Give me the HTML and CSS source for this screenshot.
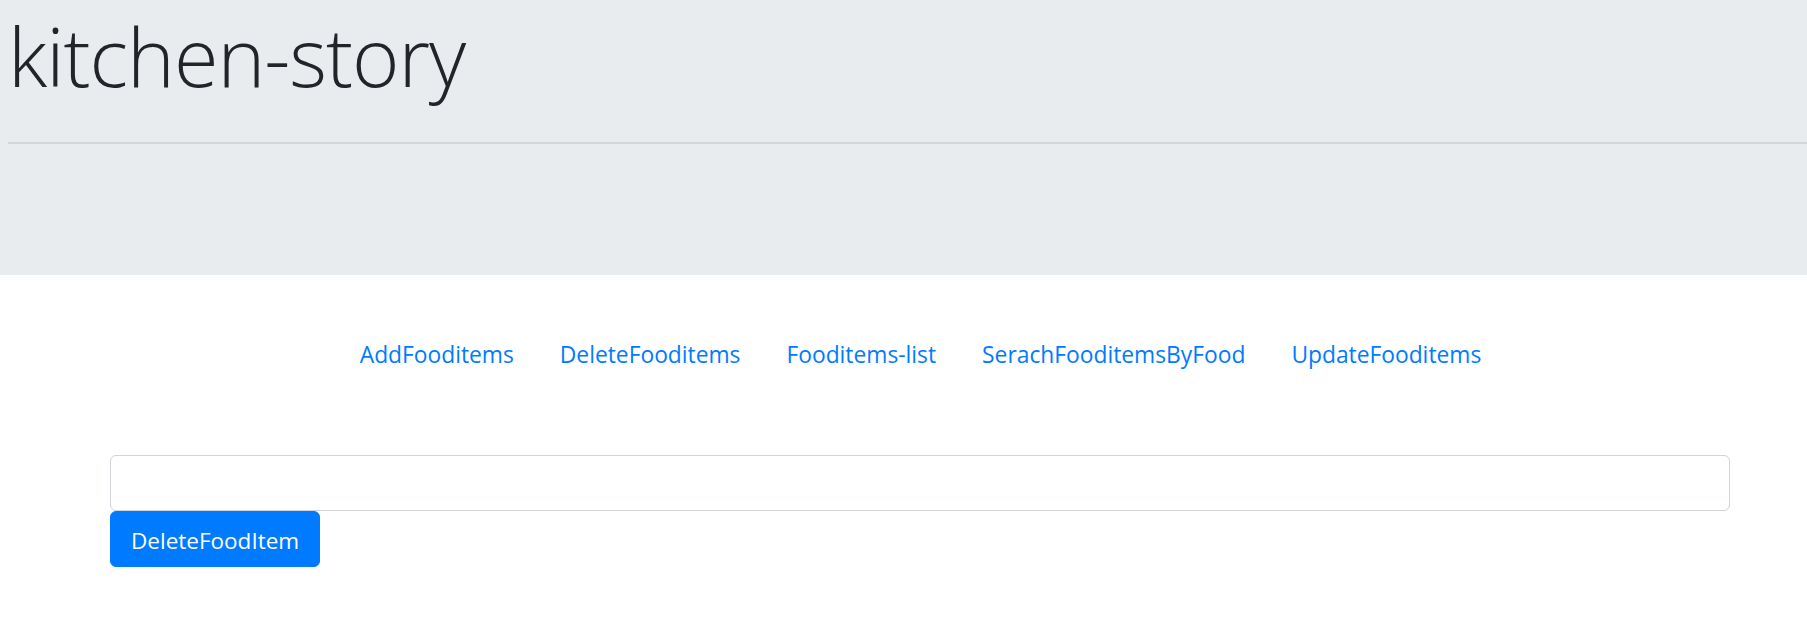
FILE: index.html
```html
<!DOCTYPE html>
<html lang="en">
<head>
<meta charset="utf-8">
<title>kitchen-story</title>
<link rel="stylesheet" href="styles.css">
</head>
<body>
<header class="jumbotron">
  <h1 class="title">kitchen-story</h1>
  <hr class="rule">
</header>
<nav class="nav">
  <a class="nav-link" href="#">AddFooditems</a>
  <a class="nav-link" href="#">DeleteFooditems</a>
  <a class="nav-link" href="#">Fooditems-list</a>
  <a class="nav-link" href="#">SerachFooditemsByFood</a>
  <a class="nav-link" href="#">UpdateFooditems</a>
</nav>
<main class="content">
  <input class="field" type="text">
  <button class="btn" type="button">DeleteFoodItem</button>
</main>
</body>
</html>
```
FILE: styles.css
```css
html, body {
  margin: 0;
  padding: 0;
  background: #fff;
}
body {
  font-family: "Open Sans", "Noto Sans", sans-serif;
  color: #212529;
}
.jumbotron {
  background: #e9ecef;
  height: 275px;
  box-sizing: border-box;
  padding: 5px 0 0 8px;
}
.title {
  margin: 0;
  font-size: 81px;
  font-weight: 300;
  line-height: 101px;
  letter-spacing: -1px;
}
.rule {
  margin: 36px 0 0;
  border: 0;
  border-top: 2px solid #d3d6d9;
  height: 0;
}
.nav {
  margin-top: 50px;
  display: flex;
  justify-content: center;
  padding-left: 34px;
}
.nav-link {
  display: block;
  padding: 12px 23px 10px;
  font-size: 22.8px;
  line-height: 36px;
  color: #007bff;
  text-decoration: none;
}
.content {
  padding: 72px 77px 0 110px;
  display: flex;
  flex-direction: column;
  align-items: flex-start;
}
.field {
  width: 100%;
  height: 56px;
  box-sizing: border-box;
  border: 1.5px solid #ced4da;
  border-radius: 6px;
  background: #fff;
  margin: 0;
}
.btn {
  margin: 0;
  height: 56px;
  padding: 3px 20px 0;
  border: 1px solid #007bff;
  background: #007bff;
  color: #fff;
  border-radius: 6px;
  font-family: "Open Sans", "Noto Sans", sans-serif;
  font-size: 22.5px;
  line-height: 36px;
}
```
